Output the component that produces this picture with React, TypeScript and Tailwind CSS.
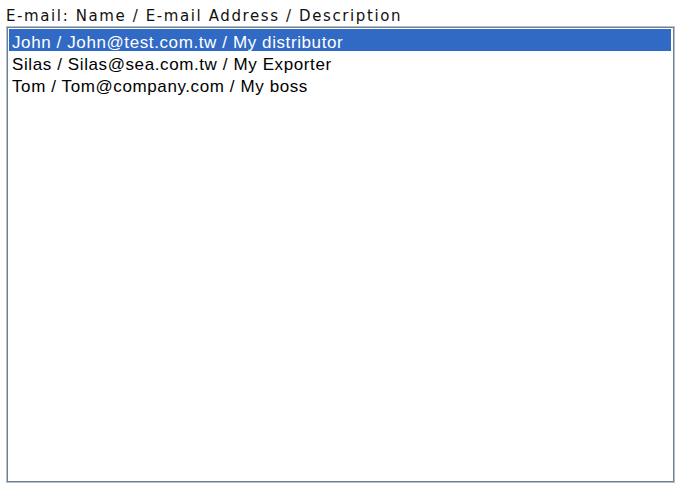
const entries = [
  "John / John@test.com.tw / My distributor",
  "Silas / Silas@sea.com.tw / My Exporter",
  "Tom / Tom@company.com / My boss",
];

const App = () => {
  return (
    <main className="w-[676px] h-[484px] bg-white overflow-hidden">
      <div className="pl-[6px] pt-[8px] h-[26px] text-[15px] leading-[17px] tracking-[1.6px] text-[#111] whitespace-nowrap font-['DejaVu_Sans',sans-serif]">
        E-mail: Name / E-mail Address / Description
      </div>
      <div className="ml-[6px] w-[669px] h-[457px] border border-[#b4bfcc]">
        <div className="h-full border border-[#6f7f90] bg-white pt-px pl-px pr-[2px]">
          <ul className="font-['Liberation_Sans',Arial,sans-serif] text-[17px] tracking-[0.6px] text-black">
            {entries.map((entry, i) => (
              <li
                key={entry}
                className={
                  i === 0
                    ? "h-[22px] pt-[5px] leading-[17px] pl-[3px] whitespace-nowrap bg-[#316ac5] text-white"
                    : "h-[22px] pt-[5px] leading-[17px] pl-[3px] whitespace-nowrap"
                }
              >
                {entry}
              </li>
            ))}
          </ul>
        </div>
      </div>
    </main>
  );
};

export default App;
